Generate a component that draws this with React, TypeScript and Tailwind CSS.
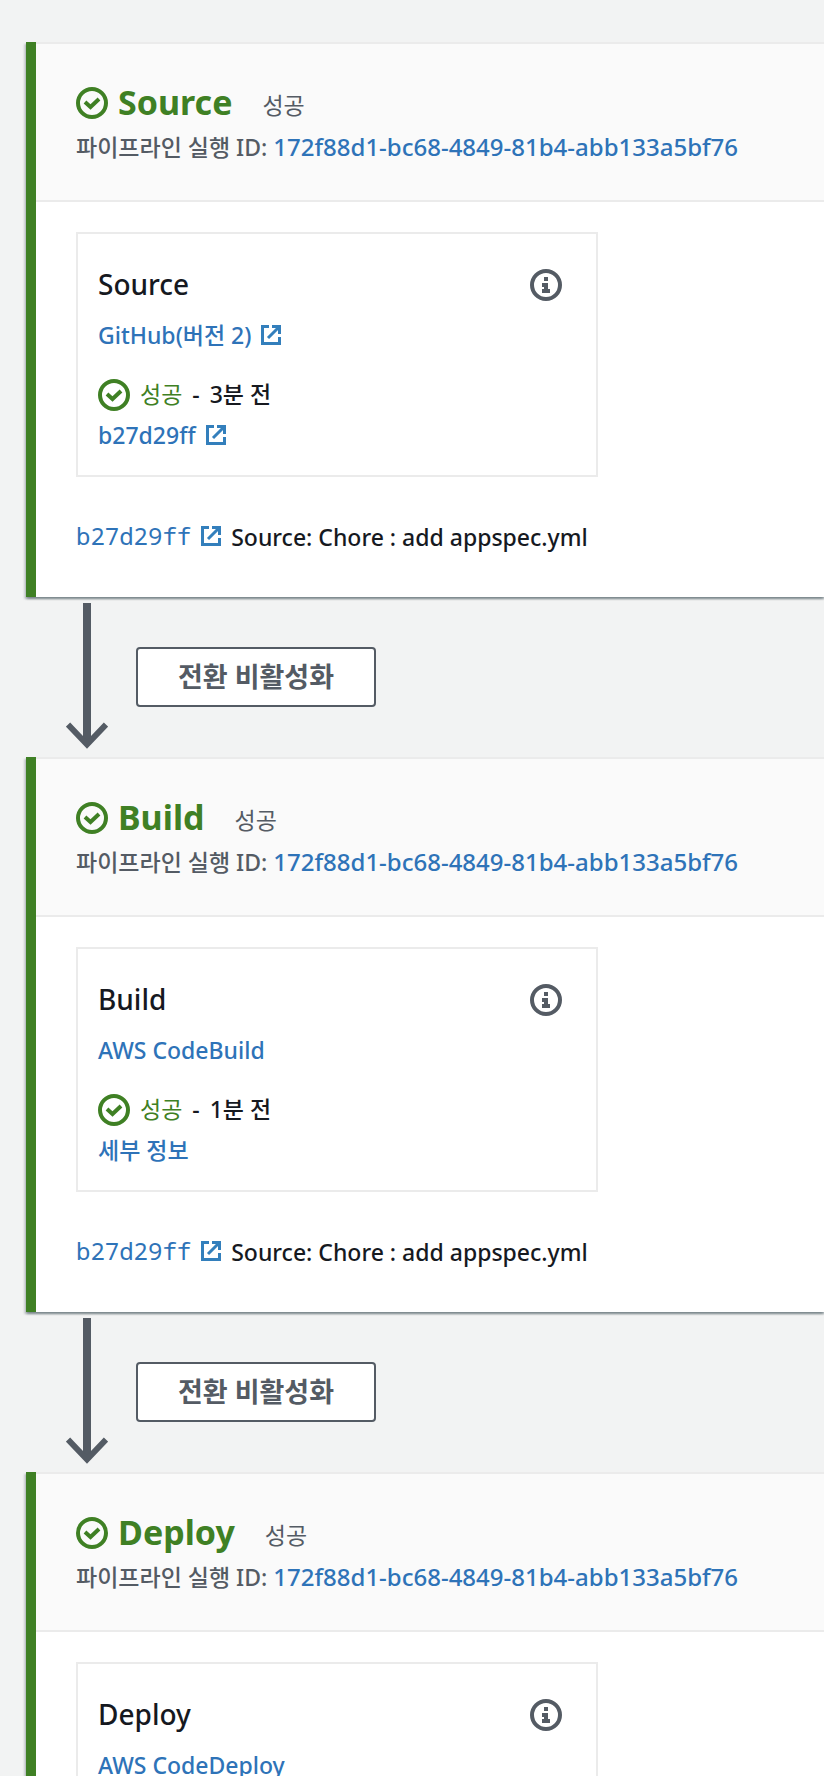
import type { ReactNode } from "react";

type Stage = {
  name: string;
  provider: string;
  providerExternal?: boolean;
  age?: string;
  detail?: string;
  detailExternal?: boolean;
};

const EXECUTION_ID = "172f88d1-bc68-4849-81b4-abb133a5bf76";

const stages: Stage[] = [
  {
    name: "Source",
    provider: "GitHub(버전 2)",
    providerExternal: true,
    age: "3분 전",
    detail: "b27d29ff",
    detailExternal: true,
  },
  { name: "Build", provider: "AWS CodeBuild", age: "1분 전", detail: "세부 정보" },
  { name: "Deploy", provider: "AWS CodeDeploy" },
];

function SuccessIcon() {
  return (
    <svg className="size-8 shrink-0 text-[#3f8024]" viewBox="0 0 32 32" fill="none" stroke="currentColor" strokeWidth="4" aria-hidden="true">
      <circle cx="16" cy="16" r="14" />
      <path d="M9 15l5.5 5L23 12" />
    </svg>
  );
}

function InfoIcon() {
  return (
    <svg className="size-8" viewBox="0 0 32 32" fill="currentColor" aria-hidden="true">
      <circle cx="16" cy="16" r="14" fill="none" stroke="currentColor" strokeWidth="4" />
      <path d="M14 8h4v4h-4zM12 14h6v6h2v4h-8v-4h2v-2h-2z" />
    </svg>
  );
}

function ExternalIcon() {
  return (
    <svg className="size-5 shrink-0 text-[#337fbc]" viewBox="0 0 20 20" fill="none" stroke="currentColor" strokeWidth="3" aria-hidden="true">
      <path d="M8 1.5H1.5v17h17V12M11 1.5h7.5V9M18 2L7 13" />
    </svg>
  );
}

function TextLink({ children, external }: { children: ReactNode; external?: boolean }) {
  return (
    <a href="#" className="inline-flex items-center gap-2.5 text-[#2e73b8]">
      <span>{children}</span>
      {external && <ExternalIcon />}
    </a>
  );
}

function StageCard({ stage }: { stage: Stage }) {
  return (
    <section className="shrink-0 border-l-10 border-[#3f8024] bg-white shadow-[0_2px_2px_0_rgba(0,28,36,0.3),2px_2px_2px_0_rgba(0,28,36,0.15),-2px_2px_2px_0_rgba(0,28,36,0.15)]">
      <header className="border-y-2 border-[#ebebeb] bg-[#fafafa] pt-[39px] pr-10 pb-[37px] pl-10">
        <div className="flex h-10 items-center">
          <SuccessIcon />
          <h2 className="ml-2.5 pb-0.5 text-[34px] leading-[38px] font-bold text-[#3f8024]">{stage.name}</h2>
          <span className="mt-1 ml-[30px] font-normal text-[#545b64]">성공</span>
        </div>
        <p className="mt-2 flex gap-1.5 whitespace-nowrap text-[#545b64]">
          <span>파이프라인 실행 ID:</span>
          <span className="flex text-2xl leading-8">
            <TextLink>{EXECUTION_ID}</TextLink>
          </span>
        </p>
      </header>

      <div className="px-10 pt-[30px] pb-[45px]">
        <article className="min-h-[245px] max-w-[522px] border-2 border-[#ebebeb] pt-[31px] pb-6 pl-5">
          <div className="flex items-center justify-between pr-[34px]">
            <h3 className="pb-0.5 text-[28px] leading-[38px]">{stage.name}</h3>
            <button type="button" aria-label="정보" className="text-[#545b64]">
              <InfoIcon />
            </button>
          </div>
          <div className="mt-3.5 flex h-8">
            <TextLink external={stage.providerExternal}>{stage.provider}</TextLink>
          </div>
          {stage.age && (
            <div className="mt-7 flex h-8 items-center gap-2.5">
              <SuccessIcon />
              <span className="pb-0.5 font-normal text-[#3f8024]">성공</span>
              <span className="pb-0.5">-</span>
              <span className="pb-0.5">{stage.age}</span>
            </div>
          )}
          {stage.detail && (
            <div className="mt-2 flex h-8">
              <TextLink external={stage.detailExternal}>{stage.detail}</TextLink>
            </div>
          )}
        </article>

        {stage.detail && (
          <div className="mt-[43px] flex h-8 items-center gap-2.5 whitespace-nowrap">
            <span className="flex font-['Noto_Sans_Mono','DejaVu_Sans_Mono',monospace] text-2xl leading-8 font-normal">
              <TextLink external>b27d29ff</TextLink>
            </span>
            <span className="pt-0.5">Source: Chore : add appspec.yml</span>
          </div>
        )}
      </div>
    </section>
  );
}

function Transition() {
  return (
    <div className="flex h-40 shrink-0 items-start gap-7 pt-1.5 pl-10">
      <svg className="h-[146px] w-[42px] shrink-0 text-[#545b64]" viewBox="0 0 42 146" fill="none" stroke="currentColor" aria-hidden="true">
        <path d="M21 0v140" strokeWidth="8" />
        <path d="M2 121.5l19 20 19-20" strokeWidth="6" />
      </svg>
      <button type="button" className="mt-11 h-15 w-60 rounded-sm border-2 border-[#545b64] bg-white text-[27px] leading-8 font-bold text-[#545b64]">
        전환 비활성화
      </button>
    </div>
  );
}

export default function App() {
  return (
    <main className="flex h-screen flex-col overflow-hidden bg-[#f2f3f3] pt-[42px] pl-[26px] font-['Noto_Sans','Noto_Sans_CJK_KR',sans-serif] text-[23px] leading-8 font-medium text-[#16191f]">
      {stages.map((stage, index) => (
        <div key={stage.name} className="shrink-0">
          {index > 0 && <Transition />}
          <StageCard stage={stage} />
        </div>
      ))}
    </main>
  );
}
